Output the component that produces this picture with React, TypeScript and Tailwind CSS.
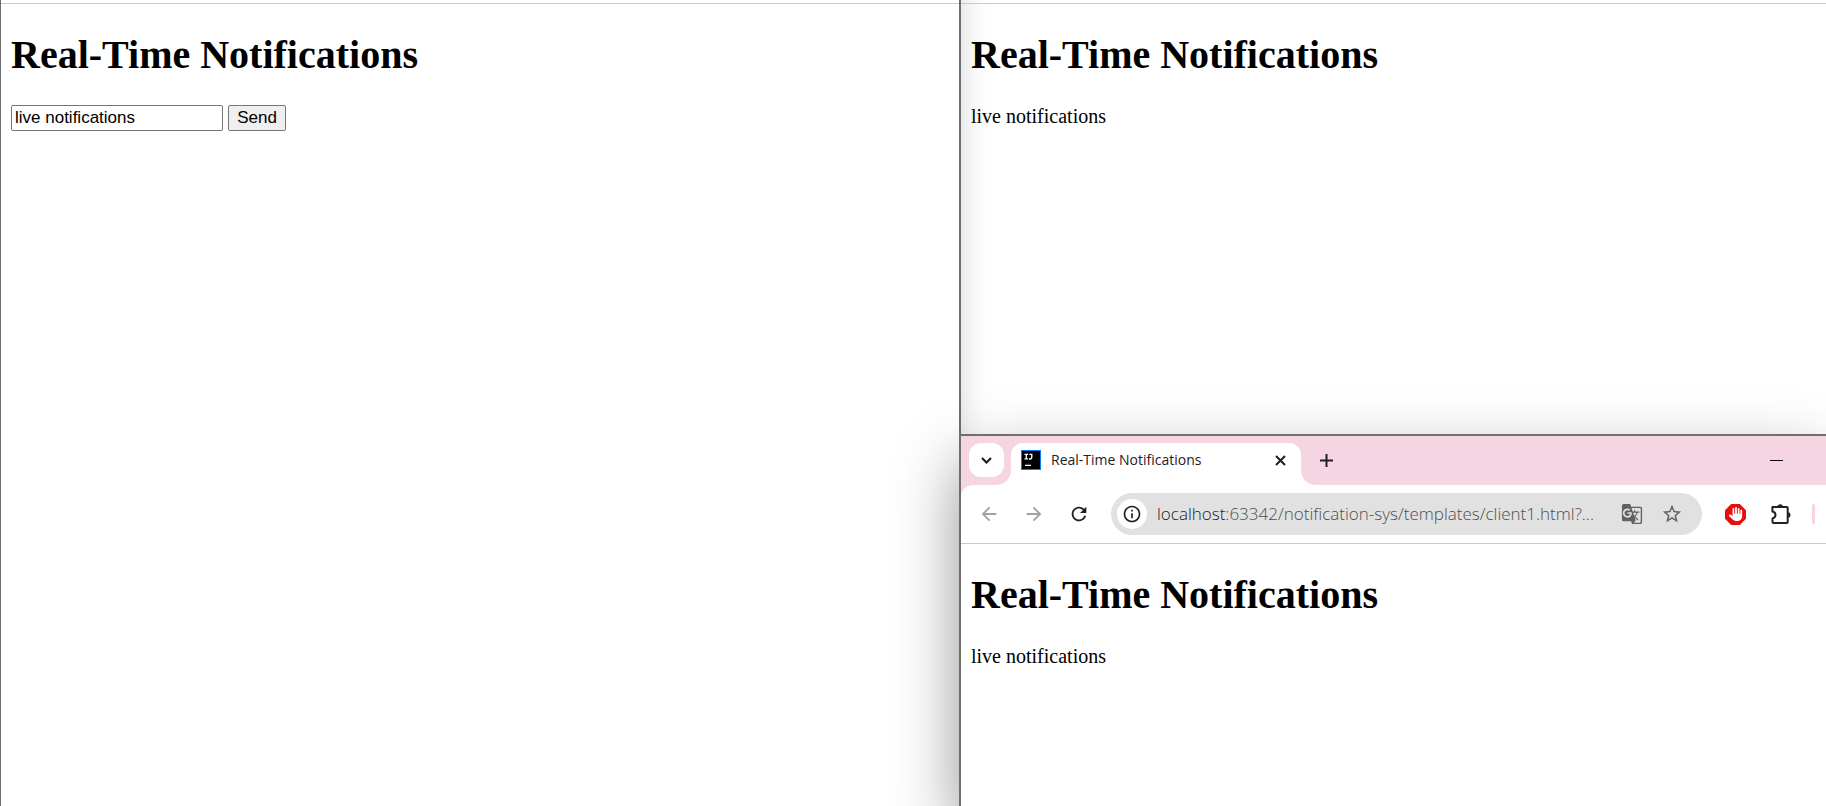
import { useState, type ReactNode } from "react";
import {
  MdArrowBack,
  MdArrowForward,
  MdGTranslate,
  MdInfoOutline,
  MdRefresh,
  MdStarBorder,
} from "react-icons/md";
import { FaHand } from "react-icons/fa6";

function Page({ children }: { children: ReactNode }) {
  return (
    <div className="px-[10px] pt-7 font-['Liberation_Serif',serif] text-black">
      <h1 className="text-[40px] leading-[46px] font-bold">Real-Time Notifications</h1>
      <div className="mt-[27px]">{children}</div>
    </div>
  );
}

function SenderForm() {
  const [message, setMessage] = useState("live notifications");
  return (
    <form
      className="flex gap-[5px] font-['Liberation_Sans',sans-serif] text-[17px] leading-5"
      onSubmit={(e) => e.preventDefault()}
    >
      <input
        aria-label="Message"
        className="h-[26px] w-[212px] rounded-[2px] border border-[#767676] bg-white px-[3px] outline-none"
        value={message}
        onChange={(e) => setMessage(e.target.value)}
      />
      <button className="h-[26px] w-[58px] rounded-[2px] border border-[#767676] bg-[#efefef]">
        Send
      </button>
    </form>
  );
}

function Message() {
  return <p className="text-[20px] leading-[23px]">live notifications</p>;
}

function JetBrainsIcon() {
  return (
    <svg className="size-5 shrink-0" viewBox="0 0 20 20" aria-hidden="true">
      <rect width="20" height="20" fill="#087cfa" />
      <rect x="1" y="1" width="18" height="18" fill="#000" />
      <path
        d="M3.5 4.4h3.6M5.3 4.4v4.4M3.5 8.9h3.6M8.4 4.4h2.4v3.2q0 1.4-1.4 1.4H8M4 15.4h6"
        fill="none"
        stroke="#fff"
        strokeWidth="1.3"
      />
    </svg>
  );
}

function AdBlockIcon() {
  return (
    <span className="grid place-items-center">
      <svg className="col-start-1 row-start-1 size-[21px]" viewBox="0 0 21 21" aria-hidden="true">
        <path d="M6.2 0h8.6L21 6.2v8.6L14.8 21H6.2L0 14.8V6.2z" fill="#e90d0d" />
      </svg>
      <FaHand className="col-start-1 row-start-1 size-[14px] text-white" />
    </span>
  );
}

function PuzzleIcon() {
  return (
    <svg className="size-[22px]" viewBox="0 0 22 22" aria-hidden="true">
      <path
        d="M2.5 4h14.2q1 0 1 1v14q0 1-1 1H3.5q-1 0-1-1v-3.6c4-.9 4-5.900-.1-6.800V4z"
        fill="none"
        stroke="#1f2023"
        strokeWidth="2"
        strokeLinejoin="round"
      />
      <path d="M7.200 3.500a3 2.900 0 0 1 5.900 0zM18.200 9.100a2.900 3 0 0 1 0 5.900z" fill="#1f2023" />
    </svg>
  );
}

function ToolButton({ label, children }: { label: string; children: ReactNode }) {
  return (
    <button aria-label={label} className="flex h-10 w-[45px] shrink-0 items-center justify-center">
      {children}
    </button>
  );
}

function TabFlare({ flip }: { flip?: boolean }) {
  return (
    <svg
      className={flip ? "size-4 -scale-x-100 self-end" : "size-4 self-end"}
      viewBox="0 0 16 16"
      aria-hidden="true"
    >
      <path d="M16 0v16H0C10 16 16 10 16 0z" fill="#fff" />
    </svg>
  );
}

function TabStrip() {
  return (
    <div className="flex h-[49px] bg-[#f6d5e3] pl-2 text-[#1f2023]">
      <button
        aria-label="Search tabs"
        className="mt-[7px] flex h-[34px] w-[35px] items-center justify-center rounded-xl bg-white"
      >
        <svg className="h-[7px] w-[11px]" viewBox="0 0 11 7" aria-hidden="true">
          <path d="M1 1l4.500 4.500L10 1" fill="none" stroke="currentColor" strokeWidth="2.200" />
        </svg>
      </button>
      <div className="-ml-[9px] flex">
        <TabFlare />
        <div className="mt-[7px] flex w-[290px] items-center rounded-t-xl bg-white pr-[15px] pb-2 pl-[10px]">
          <JetBrainsIcon />
          <span className="ml-[10px] flex-1 truncate text-[14px] leading-5">Real-Time Notifications</span>
          <button aria-label="Close tab">
            <svg className="size-[11px]" viewBox="0 0 11 11" aria-hidden="true">
              <path d="M1 1l9 9M10 1l-9 9" stroke="currentColor" strokeWidth="2" />
            </svg>
          </button>
        </div>
        <TabFlare flip />
      </div>
      <button aria-label="New tab" className="ml-[3px] flex h-12 items-center">
        <svg className="size-[13px]" viewBox="0 0 13 13" aria-hidden="true">
          <path d="M6.500 0v13M0 6.500h13" stroke="currentColor" strokeWidth="2" />
        </svg>
      </button>
      <button aria-label="Minimize" className="mr-[43px] ml-auto flex h-[49px] items-center">
        <span className="h-px w-[13px] bg-black" />
      </button>
    </div>
  );
}

function Toolbar() {
  return (
    <div className="bg-[#f6d5e3]">
      <div className="flex h-[59px] items-center rounded-tl-xl border-b border-[#c9c9c9] bg-white pr-[11px] pl-[5px] text-[#1f2023]">
        <ToolButton label="Back">
          <MdArrowBack className="size-[22px] text-[#a0a0a0]" />
        </ToolButton>
        <ToolButton label="Forward">
          <MdArrowForward className="size-[22px] text-[#a0a0a0]" />
        </ToolButton>
        <ToolButton label="Reload">
          <MdRefresh className="size-[22px]" />
        </ToolButton>
        <div className="mr-[11px] ml-[10px] flex h-[42px] min-w-0 flex-1 items-center rounded-full bg-[#e1e1e1] pr-[19px] pl-[6px]">
          <button
            aria-label="Site information"
            className="flex size-[30px] shrink-0 items-center justify-center rounded-full bg-white"
          >
            <MdInfoOutline className="size-5" />
          </button>
          <div
            role="textbox"
            aria-label="Address"
            className="ml-[10px] min-w-0 flex-1 text-[17px] leading-6 font-light whitespace-nowrap text-[#4c4e51]"
          >
            <span className="text-[#1f2023]">localhost</span>
            :63342/notification-sys/templates/client1.html?...
          </div>
          <button aria-label="Translate this page" className="shrink-0">
            <MdGTranslate className="size-[22px] text-[#5f6164]" />
          </button>
          <button aria-label="Bookmark this page" className="ml-[18px] shrink-0">
            <MdStarBorder className="size-[22px] text-[#5f6164]" />
          </button>
        </div>
        <ToolButton label="Ad blocker">
          <AdBlockIcon />
        </ToolButton>
        <ToolButton label="Extensions">
          <PuzzleIcon />
        </ToolButton>
        <span className="ml-[9px] h-5 w-[3px] rounded-full bg-[#f6d5e3]" />
      </div>
    </div>
  );
}

export default function App() {
  return (
    <div className="grid h-screen grid-cols-[959fr_867fr] grid-rows-[434fr_372fr] overflow-hidden bg-white">
      <section className="row-span-2 min-w-0 border-l border-[#6f6f6f]">
        <div className="h-1 border-b border-[#c9c9c9]" />
        <Page>
          <SenderForm />
        </Page>
      </section>
      <section className="min-w-0 border-l-2 border-[#6f6f6f] shadow-[inset_32px_0_32px_-32px_rgba(0,0,0,0.16)]">
        <div className="h-1 border-b border-[#c9c9c9]" />
        <Page>
          <Message />
        </Page>
      </section>
      <section className="relative min-w-0 border-t-2 border-l-2 border-[#6f6f6f] bg-white font-['Open_Sans',sans-serif] shadow-[0_28px_60px_rgba(0,0,0,0.42)]">
        <TabStrip />
        <Toolbar />
        <Page>
          <Message />
        </Page>
      </section>
    </div>
  );
}
